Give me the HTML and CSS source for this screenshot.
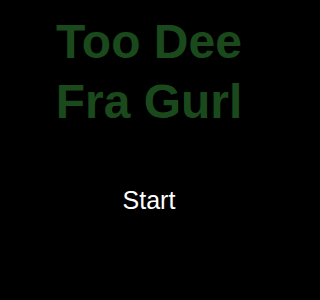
FILE: index.html
```html
<!DOCTYPE html>
<html>
<head>
<meta charset="utf-8">
<link rel="stylesheet" href="styles.css">
</head>
<body>
<main class="screen">
  <h1 class="title">Too Dee<br>Fra Gurl</h1>
  <button class="start">Start</button>
</main>
</body>
</html>
```
FILE: styles.css
```css
html, body {
  margin: 0;
  padding: 0;
  background: #000;
}
.screen {
  width: 298px;
  height: 300px;
  display: flex;
  flex-direction: column;
  align-items: center;
  font-family: "Liberation Sans", Arial, sans-serif;
}
.title {
  margin: 12px 0 0 0;
  font-size: 48px;
  line-height: 60px;
  font-weight: bold;
  color: #1a4a1c;
  text-align: center;
}
.start {
  margin-top: 54px;
  padding: 0;
  border: none;
  background: none;
  color: #fff;
  font-family: "Liberation Sans", Arial, sans-serif;
  font-size: 25px;
  line-height: 29px;
  cursor: pointer;
}
```
